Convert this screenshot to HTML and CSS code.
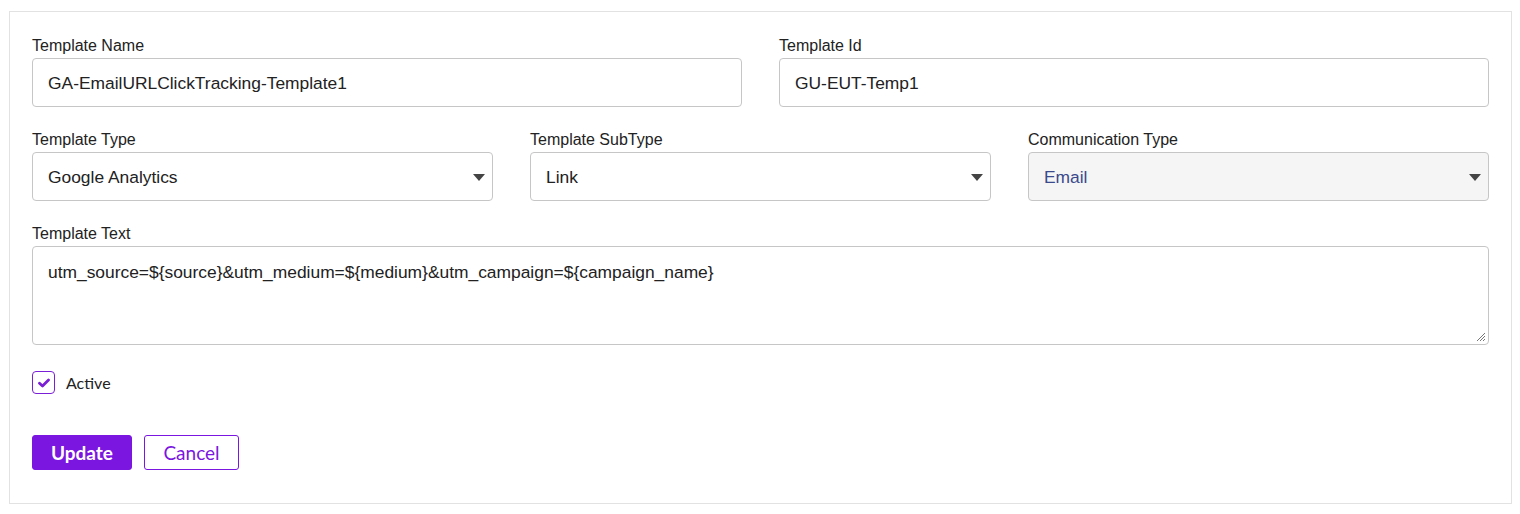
FILE: index.html
```html
<!DOCTYPE html>
<html>
<head>
<meta charset="utf-8">
<link rel="stylesheet" href="styles.css">
</head>
<body>
<div class="page">
  <div class="card">
    <div class="row row-2">
      <div class="field">
        <label class="label">Template Name</label>
        <div class="input">GA-EmailURLClickTracking-Template1</div>
      </div>
      <div class="field">
        <label class="label">Template Id</label>
        <div class="input">GU-EUT-Temp1</div>
      </div>
    </div>
    <div class="row row-3">
      <div class="field">
        <label class="label">Template Type</label>
        <div class="input select">Google Analytics<span class="caret"></span></div>
      </div>
      <div class="field">
        <label class="label">Template SubType</label>
        <div class="input select">Link<span class="caret"></span></div>
      </div>
      <div class="field">
        <label class="label">Communication Type</label>
        <div class="input select disabled">Email<span class="caret"></span></div>
      </div>
    </div>
    <div class="row">
      <div class="field">
        <label class="label">Template Text</label>
        <div class="input textarea">utm_source=${source}&amp;utm_medium=${medium}&amp;utm_campaign=${campaign_name}
          <svg class="grip" width="10" height="10" viewBox="0 0 10 10"><path d="M9 1L1 9M9 4L4 9M9 7L7 9" stroke="#777" stroke-width="1"/></svg>
        </div>
      </div>
    </div>
    <div class="check-row">
      <span class="checkbox">
        <svg width="12" height="10" viewBox="0 0 12 10"><path d="M1.5 5.2L4.5 8L10.5 2" fill="none" stroke="#7a1fd6" stroke-width="2.8" stroke-linecap="round" stroke-linejoin="round"/></svg>
      </span>
      <span class="check-label">Active</span>
    </div>
    <div class="actions">
      <button class="btn btn-primary">Update</button>
      <button class="btn btn-outline">Cancel</button>
    </div>
  </div>
</div>
</body>
</html>
```
FILE: styles.css
```css
* { box-sizing: border-box; }
html, body { margin: 0; padding: 0; background: #fff; }
body { font-family: "Liberation Sans", Arial, sans-serif; color: #222; }
.page { padding: 11px 8px 10px 9px; }
.card {
  border: 1px solid #e2e2e2;
  height: 493px;
  padding: 24px 22px 0 22px;
}
.row { display: grid; gap: 37px; grid-template-columns: 1fr; margin-bottom: 23px; }
.row-2 { grid-template-columns: 1fr 1fr; }
.row-3 { grid-template-columns: 1fr 1fr 1fr; }
.field { display: flex; flex-direction: column; }
.label { display: block; font-size: 16px; line-height: 18px; height: 19px; padding-top: 1px; color: #222; margin-bottom: 3px; }
.input {
  position: relative;
  height: 49px;
  border: 1px solid #c6c6c6;
  border-radius: 4px;
  padding: 0 15px;
  font-size: 17.4px;
  line-height: 48px;
  color: #222;
  background: #fff;
}
.select.disabled { background: #f5f5f5; color: #3a4a8c; }
.caret {
  position: absolute;
  right: 7px;
  top: 21px;
  width: 0; height: 0;
  border-left: 6px solid transparent;
  border-right: 6px solid transparent;
  border-top: 7px solid #444;
}
.textarea { height: 99px; line-height: 20px; padding-top: 15px; }
.grip { position: absolute; right: 2px; bottom: 2px; }
.check-row { display: flex; align-items: center; margin-top: 26px; height: 23px; }
.checkbox {
  width: 23px; height: 23px;
  border: 1.5px solid #7a1fd6;
  border-radius: 4px;
  display: flex; align-items: center; justify-content: center;
}
.check-label { margin-left: 11px; font-family: "Lato", sans-serif; font-size: 16px; color: #222; }
.actions { display: flex; gap: 12px; margin-top: 41px; }
.btn {
  height: 35px;
  border-radius: 3px;
  font-family: "Lato", sans-serif;
  font-size: 19px;
  cursor: pointer;
  padding: 0;
}
.btn-primary {
  width: 100px;
  background: #7a16e0;
  border: 1px solid #7a16e0;
  color: #fff;
  font-weight: 700;
}
.btn-outline {
  width: 95px;
  background: #fff;
  border: 1px solid #7a16e0;
  color: #7a16e0;
}
```
